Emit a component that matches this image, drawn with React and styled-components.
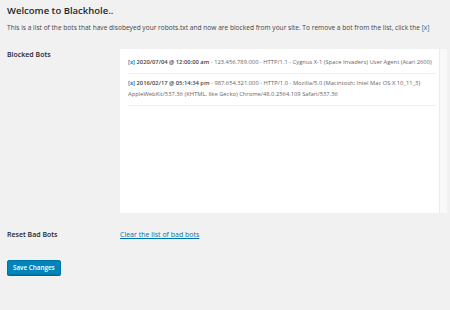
import React from "react";
import styled, { createGlobalStyle } from "styled-components";

const Global = createGlobalStyle`
  html, body {
    margin: 0;
    background: #f1f1f1;
    font-family: "Open Sans", "Liberation Sans", sans-serif;
    color: #444;
  }
`;

const Wrap = styled.div`
  width: 450px;
  height: 310px;
  padding: 0 0 0 7px;
  box-sizing: border-box;
  overflow: hidden;
`;

const Title = styled.h1`
  margin: 0;
  padding-top: 4px;
  font-size: 9.5px;
  font-weight: 600;
  line-height: 13px;
  color: #23282d;
`;

const Intro = styled.p`
  margin: 6px 0 0;
  font-size: 6.6px;
  line-height: 9px;
  color: #444;
  white-space: nowrap;
`;

const Remove = styled.span`
  color: #0073aa;
  font-weight: ${(p) => (p.$bold ? 600 : 400)};
`;

const Row = styled.div`
  display: grid;
  grid-template-columns: 113px 1fr;
  align-items: ${(p) => p.$align || "start"};
  margin-top: ${(p) => p.$top || 0}px;
`;

const Label = styled.div`
  font-size: 7px;
  font-weight: 600;
  color: #23282d;
  line-height: 10px;
  padding-top: ${(p) => p.$pad || 0}px;
`;

const Box = styled.div`
  display: flex;
  height: 164px;
  margin-right: 3px;
`;

const List = styled.div`
  flex: 1;
  background: #fff;
  padding: 8px 3px 0 8px;
`;

const Scroll = styled.div`
  width: 7px;
  background: #f9f9f9;
  border-left: 1px solid #ececec;
`;

const Entry = styled.div`
  font-size: 5.8px;
  line-height: 11px;
  color: #666;
  padding: 0 0 5px;
  border-bottom: 1px solid #f1f1f1;
  & + & {
    padding-top: 4px;
  }
`;

const Strong = styled.b`
  font-weight: 600;
  color: #444;
`;

const Link = styled.a`
  font-size: 7px;
  line-height: 10px;
  color: #0073aa;
  text-decoration: underline;
`;

const Button = styled.button`
  margin-top: 20px;
  height: 15px;
  padding: 0 5px;
  background: #0085ba;
  border: 1px solid #0073aa;
  border-radius: 2px;
  color: #fff;
  font-family: inherit;
  font-size: 6.3px;
  font-weight: 600;
  box-shadow: 0 1px 0 #006799;
`;

const bots = [
  {
    date: "2020/07/04 @ 12:00:00 am",
    rest: " - 123.456.789.000 - HTTP/1.1 - Cygnus X-1 (Space Invaders) User Agent (Atari 2600)",
  },
  {
    date: "2016/02/17 @ 05:14:34 pm",
    rest: " - 987.654.321.000 - HTTP/1.0 - Mozilla/5.0 (Macintosh; Intel Mac OS X 10_11_3) AppleWebKit/537.36 (KHTML, like Gecko) Chrome/48.0.2564.109 Safari/537.36",
  },
];

export default function App() {
  return (
    <Wrap>
      <Global />
      <Title>Welcome to Blackhole..</Title>
      <Intro>
        This is a list of the bots that have disobeyed your robots.txt and now are blocked from your site. To remove a bot from the list, click the <Remove>[x]</Remove>
      </Intro>
      <Row $top={17}>
        <Label $pad={1}>Blocked Bots</Label>
        <Box>
          <List>
            {bots.map((b) => (
              <Entry key={b.date}>
                <Remove $bold>[x]</Remove> <Strong>{b.date}</Strong>
                {b.rest}
              </Entry>
            ))}
          </List>
          <Scroll />
        </Box>
      </Row>
      <Row $top={17} $align="center">
        <Label>Reset Bad Bots</Label>
        <Link href="#">Clear the list of bad bots</Link>
      </Row>
      <Button>Save Changes</Button>
    </Wrap>
  );
}
